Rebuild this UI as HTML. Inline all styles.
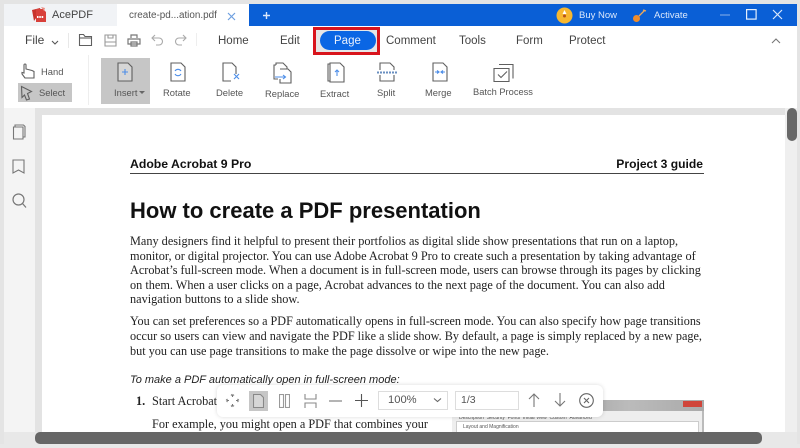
<!DOCTYPE html>
<html><head><meta charset="utf-8"><style>
html,body{margin:0;padding:0}
body{width:800px;height:448px;position:relative;overflow:hidden;background:#fff;font-family:"Liberation Sans",sans-serif;color:#444}
#w{position:absolute;left:0;top:0;width:800px;height:448px;overflow:hidden;filter:blur(.3px)}
div,svg{position:absolute}
.t{white-space:nowrap;line-height:1}
.menu{font-size:11.5px;top:36px;color:#444;white-space:nowrap;line-height:1}
.lab{font-size:9.400px;color:#555;white-space:nowrap;line-height:1}
.p{font-family:"Liberation Serif",serif;font-size:12.270px;color:#222;white-space:nowrap;line-height:1;left:130px}
svg{fill:none;stroke:#5f5f5f;stroke-width:1.100}
</style></head><body><div id="w">
<div style="left:0;top:0;width:800px;height:4px;background:#e4e4e4"></div>
<div style="left:0;top:0;width:4px;height:448px;background:#e4e4e4"></div>
<div style="left:797px;top:0;width:3px;height:448px;background:#e4e4e4"></div>
<div style="left:4px;top:4px;width:113px;height:22px;background:#f1f3f6"></div>
<div style="left:249px;top:4px;width:548px;height:22px;background:#0a5fd6"></div>
<svg style="left:30px;top:6px" width="20" height="18" viewBox="0 0 20 18"><path d="M2 4l8-2 1 3-7 10z" fill="#c9332c" stroke="none"/><path d="M6 3h7l3 3v10H6z" fill="#d8403a" stroke="none"/><path d="M11 1l4 1-1 3z" fill="#e98b80" stroke="none"/><path d="M7 11h7" stroke="#fff" stroke-width="2" stroke-dasharray="1.500 .8"/></svg>
<div class="t" style="left:52px;top:10px;font-size:11px;color:#444">AcePDF</div>
<div class="t" style="left:129px;top:11px;font-size:9.900px;color:#555">create-pd...ation.pdf</div>
<svg style="left:227px;top:12px;stroke:#6d9fe0;stroke-width:1.200" width="9" height="9"><path d="M1 1l7 7M8 1l-7 7"/></svg>
<svg style="left:262px;top:11px;stroke:#dbe8fb;stroke-width:1.400" width="9" height="9"><path d="M4.500 1v7M1 4.500h7"/></svg>
<svg style="left:556px;top:7px;stroke:none" width="17" height="17"><circle cx="8.500" cy="8.500" r="8" fill="#f7b72f"/><path d="M8.500 3l2 4h-4z" fill="#fff"/><circle cx="8.500" cy="9" r="1.500" fill="#b5521d"/></svg>
<div class="t" style="left:579px;top:11px;font-size:9.500px;color:#dbe8fb">Buy Now</div>
<svg style="left:632px;top:8px;stroke-width:1.300" width="16" height="15"><circle cx="4.500" cy="10.500" r="3.500" fill="#f08c2a" stroke="none"/><path d="M7 8l6-6M11 2l3 1" stroke="#f0a95a"/></svg>
<div class="t" style="left:654px;top:11px;font-size:9.500px;color:#dbe8fb">Activate</div>
<svg style="left:720px;top:14px;stroke:#7fa9e6" width="10" height="2"><path d="M0 1h10"/></svg>
<svg style="left:746px;top:9px;stroke:#e4eefc;stroke-width:1.200" width="11" height="11"><rect x=".6" y=".6" width="9.500" height="9.500"/></svg>
<svg style="left:772px;top:9px;stroke:#dbe8fb;stroke-width:1.200" width="11" height="11"><path d="M1 1l9 9M10 1l-9 9"/></svg>

<div class="menu" style="left:25px;top:34px;font-size:12px">File</div>
<svg style="left:51px;top:40px;stroke:#555" width="8" height="5"><path d="M1 1l3 3 3-3"/></svg>
<div style="left:68px;top:33px;width:1px;height:15px;background:#e8e8e8"></div>
<svg style="left:78px;top:33px" width="15" height="14"><path d="M1.500 12.500v-11h4l1.500 2h6.500v9z"/><path d="M1.500 5h12"/></svg>
<svg style="left:104px;top:34px;stroke:#999" width="13" height="13"><path d="M1 1h11v11H1zM4 1v3h5V1M1 8h11"/></svg>
<svg style="left:127px;top:34px;stroke:#777;stroke-width:1.200" width="14" height="13"><path d="M4 4V1h6v3M1 5h12v5H1zM4 8h6v4H4z"/></svg>
<svg style="left:151px;top:34px;stroke:#aaa" width="13" height="12"><path d="M4 1L1 4l3 3M1 4h7a3.500 3.500 0 0 1 0 7H5"/></svg>
<svg style="left:174px;top:34px;stroke:#aaa" width="13" height="12"><path d="M9 1l3 3-3 3M12 4H5a3.500 3.500 0 0 0 0 7h3"/></svg>
<div style="left:196px;top:33px;width:1px;height:13px;background:#eee"></div>
<div class="menu" style="left:218px">Home</div>
<div class="menu" style="left:280px">Edit</div>
<div style="left:313px;top:27px;width:67px;height:28px;border:3px solid #d8141c;box-sizing:border-box;background:#e6e6e6"></div>
<div style="left:320px;top:31px;width:56px;height:19px;border-radius:10px;background:#0a66e4"></div>
<div class="menu" style="left:334px;color:#e8f0fd">Page</div>
<div class="menu" style="left:386px">Comment</div>
<div class="menu" style="left:459px">Tools</div>
<div class="menu" style="left:516px">Form</div>
<div class="menu" style="left:569px">Protect</div>
<svg style="left:771px;top:38px;stroke:#777" width="10" height="6"><path d="M1 5l4-4 4 4"/></svg>

<div style="left:18px;top:83px;width:54px;height:19px;background:#c6c6c6"></div>
<div style="left:88px;top:55px;width:1px;height:50px;background:#eee"></div>
<div style="left:101px;top:58px;width:49px;height:46px;background:#c6c6c6"></div>
<svg style="left:20px;top:63px" width="16" height="16"><path d="M5 15l-3-4v-1.500l2 .5V2a1 1 0 0 1 2 0v4l6 1.500 2 1V15z"/></svg>
<div class="lab" style="left:41px;top:67px">Hand</div>
<svg style="left:20px;top:85px" width="13" height="16"><path d="M1.500 1.500l10 5-4 2 2 5.500-3 1-2-5-2.500 2.500z"/></svg>
<div class="lab" style="left:39px;top:88px">Select</div>

<svg style="left:116px;top:62px;fill:#d6d6d6" width="18" height="20"><path d="M2 1h10l4 4v14H2z"/><path d="M9 7v6M6 10h6" stroke="#4d8ee8"/></svg>
<div class="lab" style="left:114px;top:88px">Insert</div>
<div style="left:139px;top:91px;width:0;height:0;border:3px solid transparent;border-top:3.500px solid #666;border-bottom:0"></div>
<svg style="left:169px;top:62px" width="18" height="20"><path d="M2 1h10l4 4v14H2z"/><path d="M6 9a3.500 3.500 0 0 1 6 0M12 12a3.500 3.500 0 0 1-6 0" stroke="#4d8ee8"/></svg>
<div class="lab" style="left:163px;top:88px">Rotate</div>
<svg style="left:221px;top:62px" width="20" height="20"><path d="M10 19H2V1h9l4 4v7"/><path d="M14 13l5 5M19 13l-5 5" stroke="#4d8ee8" transform="translate(-1 -1)"/></svg>
<div class="lab" style="left:216px;top:88px">Delete</div>
<svg style="left:272px;top:62px" width="20" height="22"><path d="M4 3V1h7l4 4v2M4 3H2v14h4M8 7h8l3 3v11H8v-4"/><path d="M3 15h10M11 13l2.500 2-2.500 2" stroke="#4d8ee8"/></svg>
<div class="lab" style="left:265px;top:89px">Replace</div>
<svg style="left:326px;top:62px" width="19" height="21"><path d="M4 19H2V2h2M4 1h10l4 4v15H4z"/><path d="M11 14V8M9 10l2-2 2 2" stroke="#4d8ee8"/></svg>
<div class="lab" style="left:320px;top:89px">Extract</div>
<svg style="left:377px;top:62px" width="20" height="20"><path d="M3 8V1h10l4 4v3M3 13v6h14v-6"/><path d="M0 10.500h20" stroke="#6a8fc0" stroke-width="2" stroke-dasharray="2 1"/></svg>
<div class="lab" style="left:377px;top:88px">Split</div>
<svg style="left:431px;top:62px" width="18" height="20"><path d="M2 1h10l4 4v14H2z"/><path d="M4 10h4M6 8.500L8 10l-2 1.500M14 10h-4M12 8.500L10 10l2 1.500" stroke="#4d8ee8"/></svg>
<div class="lab" style="left:425px;top:88px">Merge</div>
<svg style="left:493px;top:62px" width="21" height="20"><path d="M1 7h15v13H1zM6 3h14v14M5 13l3 3 6-6" transform="translate(0 -.5)"/></svg>
<div class="lab" style="left:473px;top:88px;font-size:9.300px">Batch Process</div>

<div style="left:4px;top:108px;width:793px;height:340px;background:#e3e3e3"></div>
<div style="left:4px;top:108px;width:31px;height:340px;background:#f4f4f4"></div>
<div style="left:42px;top:115px;width:743px;height:333px;background:#fff"></div>
<div style="left:785px;top:108px;width:12px;height:340px;background:#efefef"></div>
<div style="left:787px;top:108px;width:10px;height:33px;background:#686868;border-radius:5px"></div>
<svg style="left:12px;top:124px;stroke:#777" width="14" height="16"><path d="M3 2.500V1h8.500l1.500 1.500V13h-2M1.500 3H11v12H1.500z"/></svg>
<svg style="left:12px;top:159px;stroke:#777" width="13" height="15"><path d="M1 1h11v13l-5.500-3-5.500 3z"/></svg>
<svg style="left:12px;top:193px;stroke:#777;stroke-width:1.200" width="15" height="16"><circle cx="6.500" cy="6.500" r="5.500"/><path d="M10.500 10.500l3.500 4"/></svg>

<div class="t" style="left:130px;top:158px;font-size:12.250px;font-weight:bold;color:#111">Adobe Acrobat 9 Pro</div>
<div class="t" style="right:97px;top:158px;font-size:12.100px;font-weight:bold;color:#111">Project 3 guide</div>
<div style="left:130px;top:173px;width:574px;height:1px;background:#444"></div>
<div class="t" style="left:130px;top:200px;font-size:22px;font-weight:bold;color:#111">How to create a PDF presentation</div>
<div class="p" style="top:235px">Many designers find it helpful to present their portfolios as digital slide show presentations that run on a laptop,</div>
<div class="p" style="top:250px;font-size:12.310px">monitor, or digital projector. You can use Adobe Acrobat 9 Pro to create such a presentation by taking advantage of</div>
<div class="p" style="top:264px;font-size:12.230px">Acrobat’s full-screen mode. When a document is in full-screen mode, users can browse through its pages by clicking</div>
<div class="p" style="top:279px">on them. When a user clicks on a page, Acrobat advances to the next page of the document. You can also add</div>
<div class="p" style="top:293px">navigation buttons to a slide show.</div>
<div class="p" style="top:315px;font-size:12.160px">You can set preferences so a PDF automatically opens in full-screen mode. You can also specify how page transitions</div>
<div class="p" style="top:330px;font-size:12.230px">occur so users can view and navigate the PDF like a slide show. By default, a page is simply replaced by a new page,</div>
<div class="p" style="top:345px;font-size:12.240px">but you can use page transitions to make the page dissolve or wipe into the new page.</div>
<div class="t" style="left:130px;top:375px;font-size:11px;font-style:italic;color:#222">To make a PDF automatically open in full-screen mode:</div>
<div class="p" style="top:395px;font-weight:bold;left:136px">1.</div>
<div class="p" style="top:395px;left:152px">Start Acrobat</div>
<div class="p" style="top:418px;left:152px">For example, you might open a PDF that combines your</div>

<div style="left:452px;top:400px;width:252px;height:48px;background:#bbb"></div>
<div style="left:452px;top:400px;width:252px;height:11px;background:linear-gradient(90deg,#777,#bbb 70%,#aaa)"></div>
<div style="left:683px;top:401px;width:19px;height:6px;background:#d0453a"></div>
<div style="left:452px;top:411px;width:250px;height:37px;background:#eee"></div>
<div style="left:456px;top:421px;width:243px;height:27px;background:#fff;border:1px solid #ccc;box-sizing:border-box"></div>
<div class="t" style="left:459px;top:416px;font-size:5px;color:#555">Description&nbsp;&nbsp;Security&nbsp;&nbsp;Fonts&nbsp;&nbsp;Initial View&nbsp;&nbsp;Custom&nbsp;&nbsp;Advanced</div>
<div class="t" style="left:463px;top:425px;font-size:5px;color:#555">Layout and Magnification</div>

<div style="left:217px;top:385px;width:386px;height:32px;background:#fff;border-radius:6px;box-shadow:0 0 4px rgba(0,0,0,.15)"></div>
<svg style="left:225px;top:393px;stroke:#777" width="15" height="15"><path d="M7.500 4V1M7.500 11v3M4 7.500H1M11 7.500h3M6 2.500l1.500-1.500 1.500 1.500M6 12.500l1.500 1.500 1.500-1.500M2.500 6L1 7.500 2.500 9M12.500 6L14 7.500 12.500 9" stroke-dasharray="2 1"/></svg>
<div style="left:249px;top:391px;width:19px;height:20px;background:#c6c6c6"></div>
<svg style="left:253px;top:394px;fill:#d6d6d6;stroke:#888" width="11" height="14"><path d="M.5.500h7l3 3v10H.5z"/></svg>
<svg style="left:279px;top:394px;stroke:#999" width="11" height="14"><rect x=".5" y=".5" width="4" height="13"/><rect x="6.500" y=".5" width="4" height="13"/></svg>
<svg style="left:304px;top:394px;stroke:#888" width="13" height="14"><path d="M1 0v5h11V0M1 14V9h11v5"/></svg>
<svg style="left:329px;top:400px;stroke:#777" width="13" height="2"><path d="M0 1h13"/></svg>
<svg style="left:355px;top:394px;stroke:#555" width="13" height="13"><path d="M0 6.500h13M6.500 0v13"/></svg>
<div style="left:378px;top:391px;width:70px;height:19px;border:1px solid #ddd;box-sizing:border-box"></div>
<div class="t" style="left:388px;top:395px;font-size:11.200px;color:#555">100%</div>
<svg style="left:433px;top:398px;stroke:#666" width="9" height="5"><path d="M1 .5l3.500 3 3.500-3"/></svg>
<div style="left:455px;top:391px;width:64px;height:19px;border:1px solid #ddd;box-sizing:border-box"></div>
<div class="t" style="left:461px;top:395px;font-size:10.500px;color:#555">1/3</div>
<svg style="left:528px;top:393px;stroke:#777" width="12" height="14"><path d="M6 14V1M1 6l5-5 5 5"/></svg>
<svg style="left:554px;top:393px;stroke:#777" width="12" height="14"><path d="M6 0v13M1 8l5 5 5-5"/></svg>
<svg style="left:579px;top:393px;stroke:#666" width="15" height="15"><circle cx="7.500" cy="7.500" r="6.800"/><path d="M5 5l5 5M10 5l-5 5"/></svg>

<div style="left:4px;top:432px;width:793px;height:12px;background:#e8e8e8"></div>
<div style="left:35px;top:432px;width:727px;height:12px;background:#666;border-radius:5px"></div>
<div style="left:0;top:444px;width:800px;height:4px;background:#e8e8e8"></div>
</div></body></html>
